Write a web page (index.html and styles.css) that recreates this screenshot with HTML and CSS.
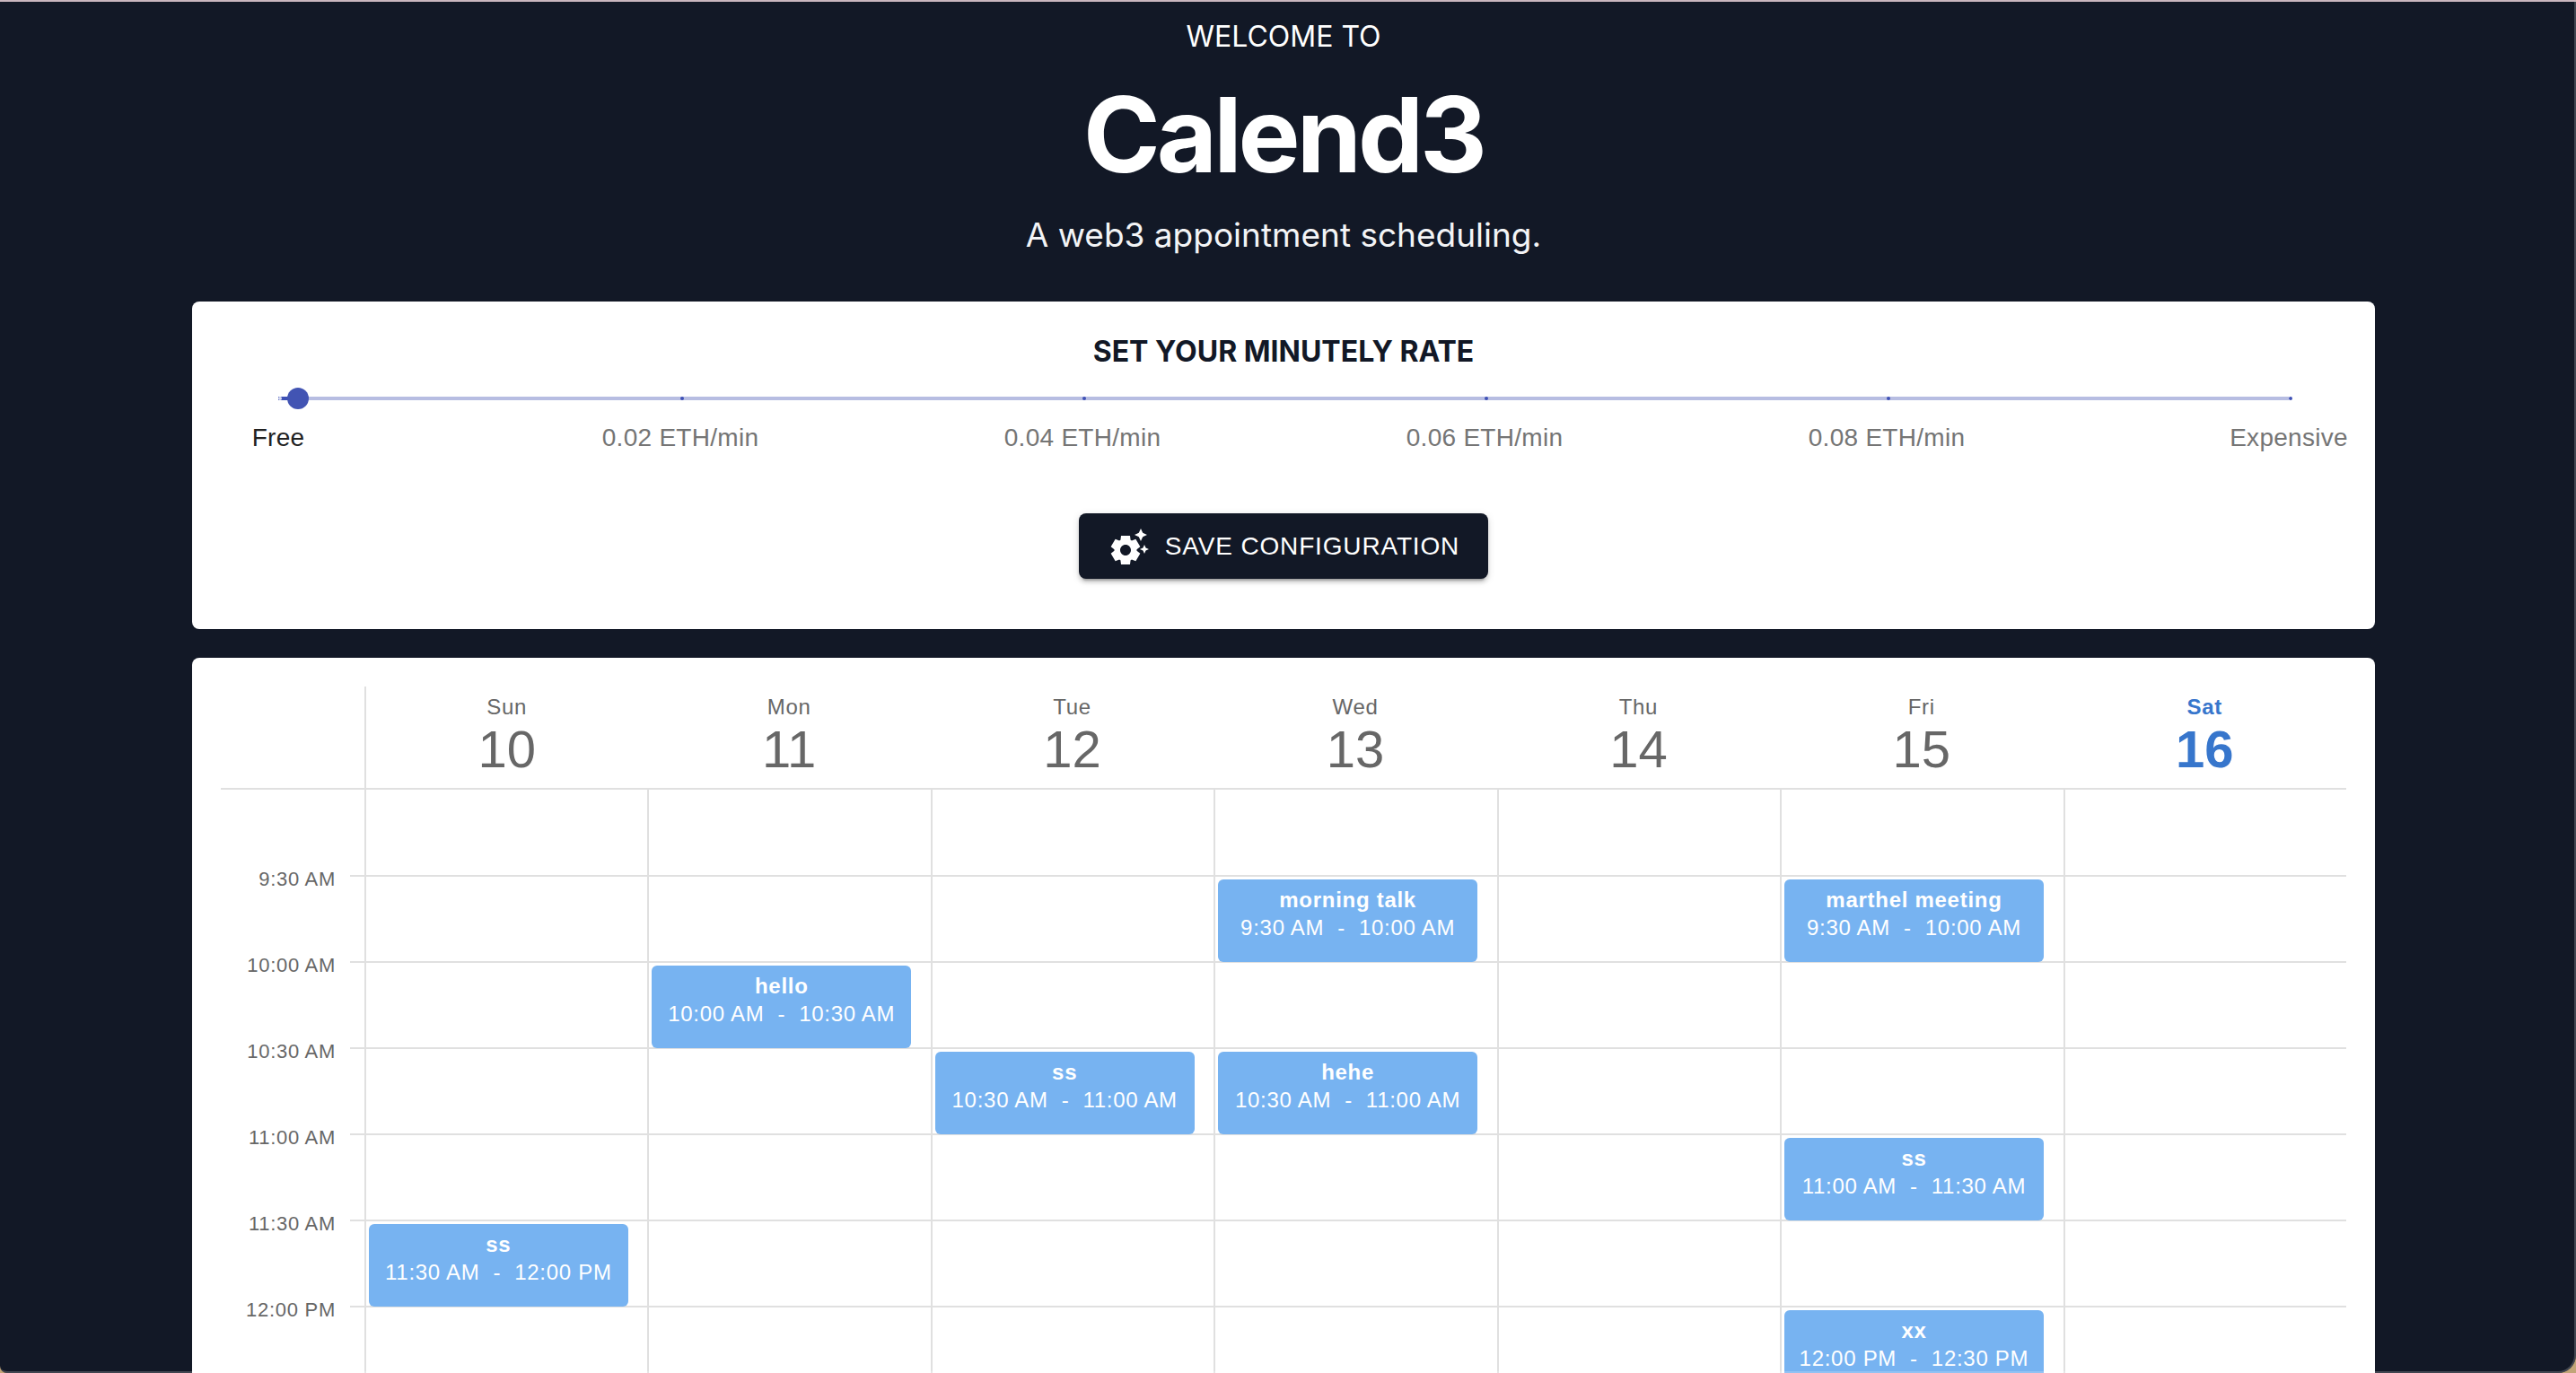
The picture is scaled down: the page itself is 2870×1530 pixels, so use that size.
FILE: index.html
```html
<!DOCTYPE html>
<html lang="en">
<head>
<meta charset="utf-8">
<title>Calend3</title>
<link rel="stylesheet" href="styles.css">
</head>
<body>
<div class="window">
<main class="page">
  <header class="hero">
    <p class="eyebrow">WELCOME TO</p>
    <h1 class="brand">Calend3</h1>
    <p class="tagline">A web3 appointment scheduling.</p>
  </header>

  <section class="card rate">
    <h2 class="rate-title"><label for="rate">SET YOUR MINUTELY RATE</label></h2>
    <div class="slider">
      <input class="slider-input" type="range" id="rate" min="0" max="100" value="1">
      <ul class="marks">
        <li class="mark active"><span>Free</span></li>
        <li class="mark"><span>0.02 ETH/min</span></li>
        <li class="mark"><span>0.04 ETH/min</span></li>
        <li class="mark"><span>0.06 ETH/min</span></li>
        <li class="mark"><span>0.08 ETH/min</span></li>
        <li class="mark"><span>Expensive</span></li>
      </ul>
    </div>
    <button class="save" type="button">
      <svg class="save-icon" viewBox="0 0 24 24" aria-hidden="true"><path d="M17.41 6.59 15 5.5l2.41-1.09L18.5 2l1.09 2.41L22 5.5l-2.41 1.09L18.5 9l-1.09-2.41zm3.87 6.13L20.5 11l-.78 1.72-1.72.78 1.72.78.78 1.72.78-1.72L23 13.5l-1.72-.78zm-5.04 1.65 1.94 1.47-2.5 4.33-2.24-.94c-.2.13-.42.26-.64.37l-.3 2.4h-5l-.3-2.41c-.22-.11-.43-.23-.64-.37l-2.24.94-2.5-4.33 1.94-1.47c-.01-.11-.01-.24-.01-.36s0-.25.01-.37l-1.94-1.47 2.5-4.33 2.24.94c.2-.13.42-.26.64-.37L7.5 6h5l.3 2.41c.22.11.43.23.64.37l2.24-.94 2.5 4.33-1.94 1.47c.01.12.01.24.01.37s0 .24-.01.36zM13 14c0-1.66-1.34-3-3-3s-3 1.34-3 3 1.34 3 3 3 3-1.34 3-3z"/></svg>
      SAVE CONFIGURATION
    </button>
  </section>

  <section class="card">
    <table class="week">
      <colgroup><col class="time-col"><col span="7"></colgroup>
      <thead>
        <tr>
          <td></td>
          <th scope="col">Sun<b>10</b></th>
          <th scope="col">Mon<b>11</b></th>
          <th scope="col">Tue<b>12</b></th>
          <th scope="col">Wed<b>13</b></th>
          <th scope="col">Thu<b>14</b></th>
          <th scope="col">Fri<b>15</b></th>
          <th scope="col" class="today">Sat<b>16</b></th>
        </tr>
      </thead>
      <tbody>
        <tr><th></th><td></td><td></td><td></td><td></td><td></td><td></td><td></td></tr>
        <tr>
          <th scope="row"><span>9:30 AM</span></th><td></td><td></td><td></td>
          <td><div class="event"><strong>morning talk</strong><div class="span"><time>9:30 AM</time>-<time>10:00 AM</time></div></div></td>
          <td></td>
          <td><div class="event"><strong>marthel meeting</strong><div class="span"><time>9:30 AM</time>-<time>10:00 AM</time></div></div></td>
          <td></td>
        </tr>
        <tr>
          <th scope="row"><span>10:00 AM</span></th><td></td>
          <td><div class="event"><strong>hello</strong><div class="span"><time>10:00 AM</time>-<time>10:30 AM</time></div></div></td>
          <td></td><td></td><td></td><td></td><td></td>
        </tr>
        <tr>
          <th scope="row"><span>10:30 AM</span></th><td></td><td></td>
          <td><div class="event"><strong>ss</strong><div class="span"><time>10:30 AM</time>-<time>11:00 AM</time></div></div></td>
          <td><div class="event"><strong>hehe</strong><div class="span"><time>10:30 AM</time>-<time>11:00 AM</time></div></div></td>
          <td></td><td></td><td></td>
        </tr>
        <tr>
          <th scope="row"><span>11:00 AM</span></th><td></td><td></td><td></td><td></td><td></td>
          <td><div class="event"><strong>ss</strong><div class="span"><time>11:00 AM</time>-<time>11:30 AM</time></div></div></td>
          <td></td>
        </tr>
        <tr>
          <th scope="row"><span>11:30 AM</span></th>
          <td><div class="event"><strong>ss</strong><div class="span"><time>11:30 AM</time>-<time>12:00 PM</time></div></div></td>
          <td></td><td></td><td></td><td></td><td></td><td></td>
        </tr>
        <tr>
          <th scope="row"><span>12:00 PM</span></th><td></td><td></td><td></td><td></td><td></td>
          <td><div class="event"><strong>xx</strong><div class="span"><time>12:00 PM</time>-<time>12:30 PM</time></div></div></td>
          <td></td>
        </tr>
      </tbody>
    </table>
  </section>
</main>
</div>
</body>
</html>
```
FILE: styles.css
```css
* { box-sizing: border-box; margin: 0; }

html { background: #c2a578; }

body {
  font-family: "Liberation Sans", Arial, sans-serif;
  font-size: 24px;
}

/* The visible application window; the calendar runs on below its edge. */
.window {
  position: relative;
  height: 100vh;
  overflow: hidden;
  border-top: 2px solid #c9b6be;
  border-radius: 0 0 20px 8px;
  background: #121826;
}

.window::after {
  content: "";
  position: absolute;
  inset: 0;
  border: solid rgba(255, 255, 255, .2);
  border-width: 0 2px 2px 0;
  border-radius: 0 0 20px 8px;
  pointer-events: none;
}

.page {
  display: flex;
  flex-direction: column;
  gap: 32px;
  max-width: 2442px;
  margin: 0 auto;
  padding-right: 10px;
}

.hero {
  display: flex;
  flex-direction: column;
  align-items: center;
  padding: 14px 0;
  font-family: Inter, sans-serif;
  color: #fff;
  text-align: center;
}

.eyebrow { font-size: 32px; line-height: 50px; }

.brand {
  margin-top: 24px;
  font-size: 116px;
  font-weight: 700;
  line-height: 120px;
  letter-spacing: -4px;
}

.tagline { margin-top: 24px; color: #f3f4f6; font-size: 37px; line-height: 56px; }

.card {
  padding: 32px;
  border-radius: 8px;
  background: #fff;
}

.rate {
  display: flex;
  flex-direction: column;
  align-items: center;
  padding-bottom: 56px;
}

.rate-title {
  font-family: Inter, sans-serif;
  font-size: 32px;
  font-weight: 700;
  line-height: 48px;
  color: #121826;
}

.slider {
  width: 100%;
  padding: 16px 64px 0;
}

/* The input is one thumb wider than the track, so the thumb centres on a value. */
.slider-input {
  display: block;
  appearance: none;
  width: calc(100% + 24px);
  height: 24px;
  margin: 0 -12px;
  background: linear-gradient(90deg, #3f51b5 1%, #b7bde2 1%) center / calc(100% - 24px) 4px no-repeat;
}

.slider-input::-webkit-slider-thumb {
  appearance: none;
  width: 24px;
  height: 24px;
  border-radius: 50%;
  background: #4254b3;
}

.marks {
  display: flex;
  justify-content: space-between;
  padding: 0;
  list-style: none;
}

.mark {
  position: relative;
  display: flex;
  justify-content: center;
  width: 0;
  padding-top: 12px;
  color: #757575;
  font-size: 28px;
  line-height: 40px;
  letter-spacing: .01em;
  white-space: nowrap;
}

.mark::before {
  content: "";
  position: absolute;
  top: -14px;
  left: 0;
  width: 4px;
  height: 4px;
  border-radius: 2px;
  background: #3f51b5;
}

.mark.active { color: #212121; }
.mark.active::before { background: #d9dcf0; }

.save {
  display: flex;
  align-items: center;
  gap: 16px;
  margin-top: 64px;
  padding: 12px 32px;
  border: 0;
  border-radius: 8px;
  background: #121826;
  box-shadow: 0 6px 2px -4px rgba(0, 0, 0, .2), 0 4px 4px rgba(0, 0, 0, .14), 0 2px 10px rgba(0, 0, 0, .12);
  color: #fff;
  font: 28px/49px "Liberation Sans", Arial, sans-serif;
  letter-spacing: .03em;
}

.save-icon { width: 48px; height: 48px; fill: currentColor; }

.week {
  width: 100%;
  table-layout: fixed;
  border-collapse: separate;
  border-spacing: 0;
  color: #676767;
  letter-spacing: .03em;
}

.time-col { width: 160px; }

.week th, .week td { padding: 0; font-weight: 400; vertical-align: top; }

.week thead th, .week thead td { height: 115px; border-bottom: 2px solid #e0e0e0; }
.week thead th { padding-top: 8px; line-height: 30px; }
.week thead td + th { border-left: 2px solid #e0e0e0; }
.week thead b { display: block; font-size: 58px; font-weight: 400; line-height: 64px; letter-spacing: 0; }
.week .today, .week .today b { color: #3776cc; font-weight: 700; }

.week tbody th {
  padding-right: 32px;
  background: linear-gradient(#e0e0e0, #e0e0e0) right bottom / 16px 2px no-repeat;
  font-size: 22px;
  line-height: 40px;
  text-align: right;
}
.week tbody th span { display: block; margin-top: -17px; }

.week tbody td {
  height: 96px;
  padding: 3px 0 0 3px;
  border: solid #e0e0e0;
  border-width: 0 0 2px 2px;
}
.week tbody tr:first-child td { height: 97px; }

.event {
  width: 93%;
  height: 92px;
  margin-bottom: -2px;
  padding: 7px;
  border-radius: 6px;
  background: #77b3f1;
  color: #fff;
  line-height: 31px;
  text-align: center;
}

.event strong { display: block; }
.span { display: flex; justify-content: center; gap: 15px; }
```
